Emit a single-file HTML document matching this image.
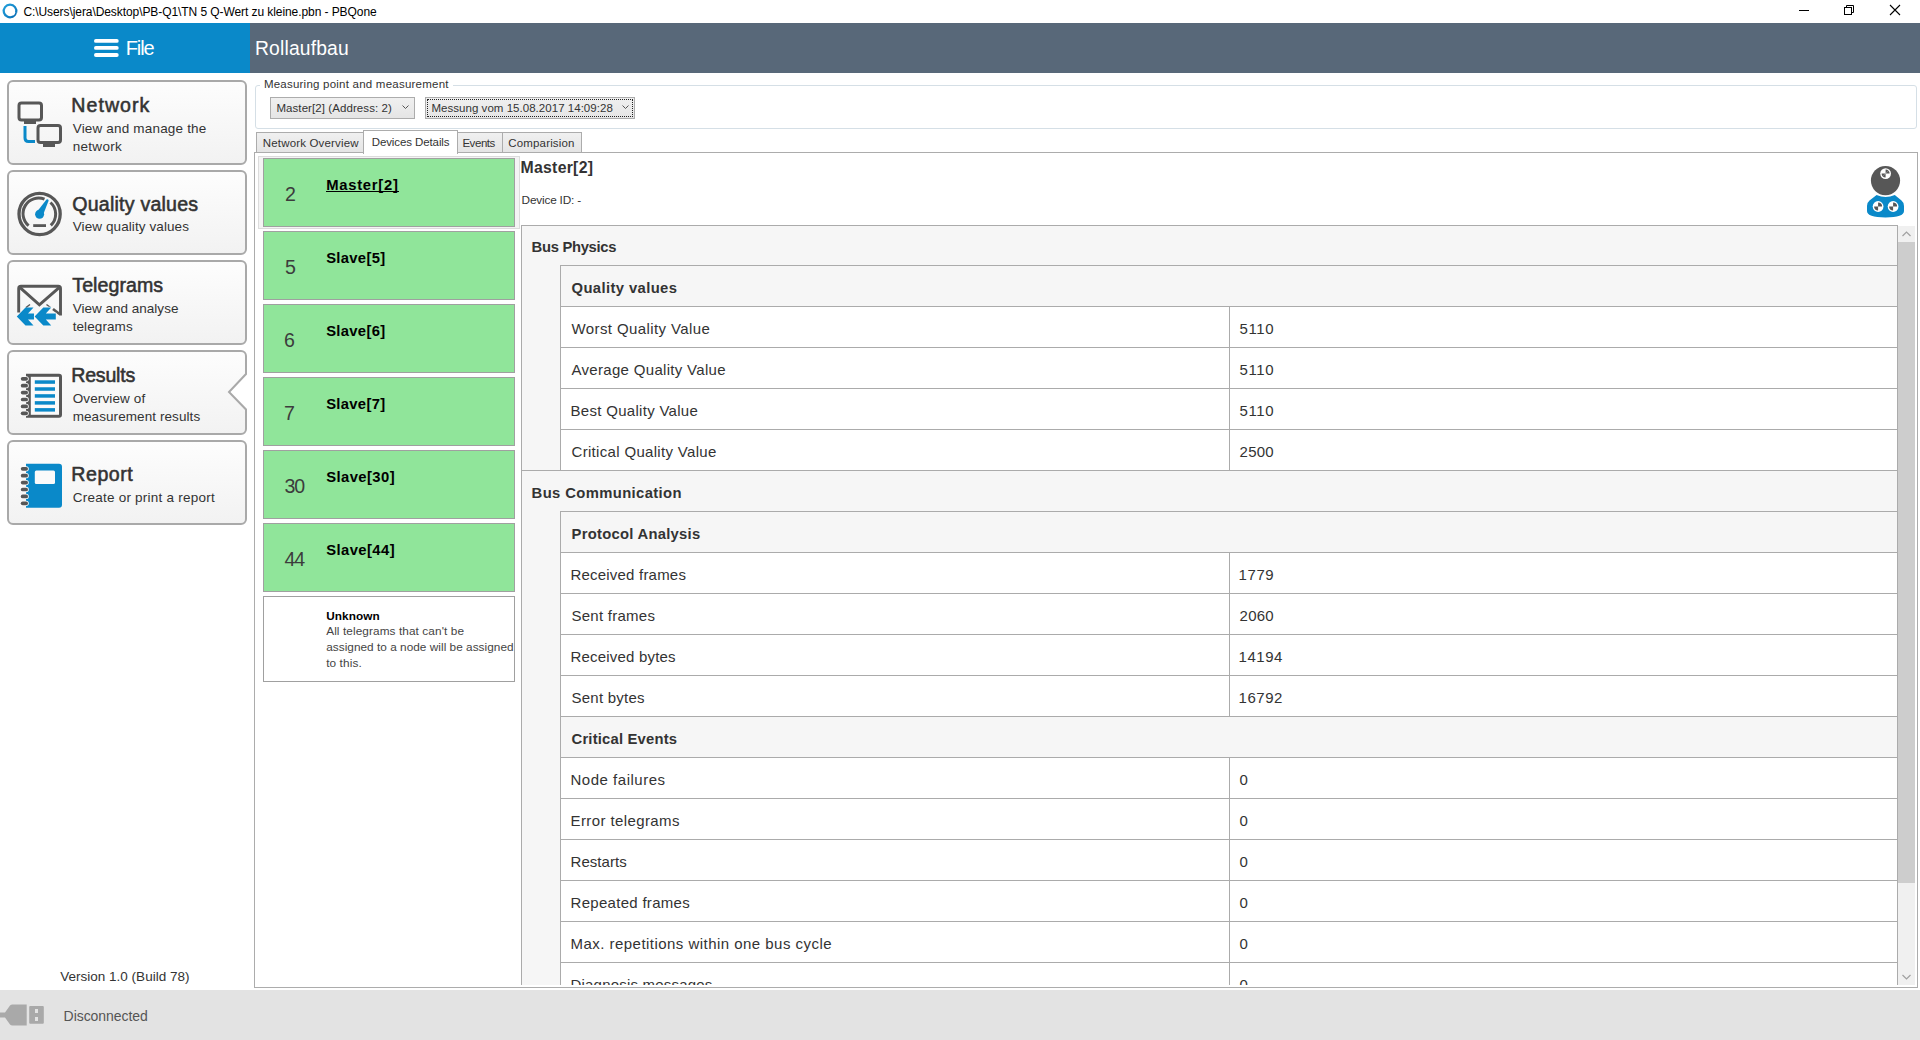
<!DOCTYPE html>
<html><head><meta charset="utf-8"><title>PBQone</title>
<style>
html,body{margin:0;padding:0;}
body{width:1920px;height:1040px;position:relative;overflow:hidden;background:#fff;font-family:"Liberation Sans",sans-serif;}
.t{position:absolute;white-space:pre;}
.b{position:absolute;}
</style></head><body>
<svg class="b" style="left:0;top:0" width="24" height="23"><defs><linearGradient id="ti" x1="0" y1="0" x2="1" y2="1"><stop offset="0" stop-color="#22a0dc"/><stop offset="1" stop-color="#0a72b8"/></linearGradient></defs><path d="M13.2 16.4A6.3 6.3 0 1 1 16.1 12.6" fill="none" stroke="url(#ti)" stroke-width="2.2"/><path d="M16.1 12.4Q15.8 15.8 12 17" fill="none" stroke="#0a72b8" stroke-width="1.6"/></svg>
<div class="t" style="left:23.40px;top:5.84px;font-size:12px;line-height:12px;letter-spacing:-0.076px;font-weight:400;color:#000;">C:\Users\jera\Desktop\PB-Q1\TN 5 Q-Wert zu kleine.pbn - PBQone</div>
<svg class="b" style="left:1790px;top:0" width="130" height="23"><line x1="9" y1="10.5" x2="19" y2="10.5" stroke="#000" stroke-width="1"/><rect x="54.5" y="7.5" width="7" height="7" fill="none" stroke="#000" stroke-width="1"/><path d="M56.5 7.5V5.5H63.5V12.5H61.5" fill="none" stroke="#000" stroke-width="1"/><path d="M100 5L110 15M110 5L100 15" stroke="#000" stroke-width="1.1"/></svg>
<div class="b" style="left:0px;top:23px;width:250px;height:50px;background:#0a89c9"></div>
<div class="b" style="left:250px;top:23px;width:1670px;height:50px;background:#586879"></div>
<svg class="b" style="left:94px;top:39px" width="25" height="19"><rect x="0" y="0" width="24.7" height="3.8" rx="1.9" fill="#fff"/><rect x="0" y="7" width="24.7" height="3.8" rx="1.9" fill="#fff"/><rect x="0" y="14.1" width="24.7" height="3.8" rx="1.9" fill="#fff"/></svg>
<div class="t" style="left:125.70px;top:38.07px;font-size:20px;line-height:20px;letter-spacing:-1.068px;font-weight:400;color:#fff;">File</div>
<div class="t" style="left:255.00px;top:39.46px;font-size:19.3px;line-height:19.3px;letter-spacing:0.171px;font-weight:400;color:#fff;">Rollaufbau</div>
<div class="b" style="left:7px;top:80px;width:240px;height:85px;box-sizing:border-box;border:2px solid #a9a9a9;border-radius:6px;background:linear-gradient(#fdfdfd,#f2f2f2)"></div>
<div class="t" style="left:71.30px;top:96.11px;font-size:19.6px;line-height:19.6px;letter-spacing:1.040px;font-weight:400;color:#333;-webkit-text-stroke:0.55px #333;">Network</div>
<div class="t" style="left:72.70px;top:122.07px;font-size:13.5px;line-height:13.5px;letter-spacing:0.181px;font-weight:400;color:#333;">View and manage the</div>
<div class="t" style="left:72.70px;top:139.97px;font-size:13.5px;line-height:13.5px;letter-spacing:0.297px;font-weight:400;color:#333;">network</div>
<div class="b" style="left:7px;top:170px;width:240px;height:85px;box-sizing:border-box;border:2px solid #a9a9a9;border-radius:6px;background:linear-gradient(#fdfdfd,#f2f2f2)"></div>
<div class="t" style="left:72.30px;top:194.91px;font-size:19.6px;line-height:19.6px;letter-spacing:0.214px;font-weight:400;color:#333;-webkit-text-stroke:0.55px #333;">Quality values</div>
<div class="t" style="left:72.70px;top:220.42px;font-size:13.5px;line-height:13.5px;letter-spacing:0.094px;font-weight:400;color:#333;">View quality values</div>
<div class="b" style="left:7px;top:260px;width:240px;height:85px;box-sizing:border-box;border:2px solid #a9a9a9;border-radius:6px;background:linear-gradient(#fdfdfd,#f2f2f2)"></div>
<div class="t" style="left:72.30px;top:276.11px;font-size:19.6px;line-height:19.6px;letter-spacing:0.058px;font-weight:400;color:#333;-webkit-text-stroke:0.55px #333;">Telegrams</div>
<div class="t" style="left:72.70px;top:302.07px;font-size:13.5px;line-height:13.5px;letter-spacing:0.009px;font-weight:400;color:#333;">View and analyse</div>
<div class="t" style="left:72.70px;top:319.57px;font-size:13.5px;line-height:13.5px;letter-spacing:0.085px;font-weight:400;color:#333;">telegrams</div>
<svg class="b" style="left:0;top:340px" width="260" height="105"><defs><linearGradient id="g" x1="0" y1="0" x2="0" y2="1"><stop offset="0" stop-color="#fdfdfd"/><stop offset="1" stop-color="#f2f2f2"/></linearGradient></defs><path d="M13 11H241A5 5 0 0 1 246 16V34L229 52L246 69.5V89A5 5 0 0 1 241 94H13A5 5 0 0 1 8 89V16A5 5 0 0 1 13 11Z" fill="url(#g)" stroke="#a9a9a9" stroke-width="2"/></svg>
<div class="t" style="left:71.30px;top:366.11px;font-size:19.6px;line-height:19.6px;letter-spacing:-0.240px;font-weight:400;color:#333;-webkit-text-stroke:0.55px #333;">Results</div>
<div class="t" style="left:72.70px;top:392.07px;font-size:13.5px;line-height:13.5px;letter-spacing:0.118px;font-weight:400;color:#333;">Overview of</div>
<div class="t" style="left:72.70px;top:409.97px;font-size:13.5px;line-height:13.5px;letter-spacing:0.078px;font-weight:400;color:#333;">measurement results</div>
<div class="b" style="left:7px;top:440px;width:240px;height:85px;box-sizing:border-box;border:2px solid #a9a9a9;border-radius:6px;background:linear-gradient(#fdfdfd,#f2f2f2)"></div>
<div class="t" style="left:71.30px;top:464.91px;font-size:19.6px;line-height:19.6px;letter-spacing:0.537px;font-weight:400;color:#333;-webkit-text-stroke:0.55px #333;">Report</div>
<div class="t" style="left:72.70px;top:490.87px;font-size:13.5px;line-height:13.5px;letter-spacing:0.239px;font-weight:400;color:#333;">Create or print a report</div>
<svg class="b" style="left:0;top:81px" width="70" height="83"><rect x="19" y="22" width="22.5" height="17" rx="2.5" fill="none" stroke="#575757" stroke-width="3"/><rect x="24" y="40" width="12" height="3" fill="#575757"/><path d="M25 45V57Q25 60.5 28.5 60.5H35" fill="none" stroke="#0a89c9" stroke-width="3"/><rect x="38" y="44.5" width="22.5" height="17" rx="2.5" fill="none" stroke="#575757" stroke-width="3"/><rect x="43" y="63" width="12" height="3" fill="#575757"/></svg>
<svg class="b" style="left:0;top:171px" width="70" height="83"><circle cx="39.6" cy="43" r="20.6" fill="none" stroke="#575757" stroke-width="3.3"/><path d="M28.6 54.6A15.6 15.6 0 0 1 44.5 28.2" fill="none" stroke="#575757" stroke-width="3"/><path d="M50.5 31.5A15.6 15.6 0 0 1 50.8 54.4" fill="none" stroke="#575757" stroke-width="3"/><rect x="33.2" y="53.2" width="12.8" height="2.8" fill="#575757"/><path d="M36 42L46.5 28.5Q48.5 27.5 48.6 29.8L43 44Z" fill="#0a89c9"/><circle cx="39.6" cy="43.3" r="4.5" fill="#0a89c9"/></svg>
<svg class="b" style="left:0;top:261px" width="70" height="83"><path d="M18.7 51.5V27.5Q18.7 25.2 21 25.2H58.2Q60.5 25.2 60.5 27.5V54.5" fill="none" stroke="#575757" stroke-width="2.9"/><path d="M19.8 26.3L39.4 43.8L59.4 26.3" fill="none" stroke="#575757" stroke-width="3"/><path d="M53 48L59.5 53" fill="none" stroke="#575757" stroke-width="2.6"/><path d="M26 46.5L30 43.5M46.5 43.5L50.5 46.5" fill="none" stroke="#575757" stroke-width="1.5"/><path d="M25.5 46.5H33.5L28 52.5H34V58.5H28L33.5 64.5H25.5L16.8 55.5Z" fill="#0a89c9"/><path d="M43.3 46.5H51.3L45.8 52.5H55.8V58.5H45.8L51.3 64.5H43.3L34.6 55.5Z" fill="#0a89c9" stroke="#f8f8f8" stroke-width="1.3" paint-order="stroke"/></svg>
<svg class="b" style="left:0;top:351px" width="70" height="83"><path d="M26 22.7H59Q62 22.7 62 25.7V63.8Q62 66.8 59 66.8H26Z" fill="#575757"/><rect x="30.8" y="25.8" width="28.2" height="38" fill="#fafafa"/><rect x="34.8" y="29.30" width="20.2" height="3.5" fill="#0a89c9"/><rect x="34.8" y="36.25" width="20.2" height="3.5" fill="#0a89c9"/><rect x="34.8" y="43.20" width="20.2" height="3.5" fill="#0a89c9"/><rect x="34.8" y="50.15" width="20.2" height="3.5" fill="#0a89c9"/><rect x="34.8" y="57.10" width="20.2" height="3.5" fill="#0a89c9"/><rect x="20.8" y="25.95" width="7.2" height="3.7" rx="1.85" fill="#575757" stroke="#fafafa" stroke-width="1.6" paint-order="stroke"/><rect x="20.8" y="32.85" width="7.2" height="3.7" rx="1.85" fill="#575757" stroke="#fafafa" stroke-width="1.6" paint-order="stroke"/><rect x="20.8" y="39.75" width="7.2" height="3.7" rx="1.85" fill="#575757" stroke="#fafafa" stroke-width="1.6" paint-order="stroke"/><rect x="20.8" y="46.65" width="7.2" height="3.7" rx="1.85" fill="#575757" stroke="#fafafa" stroke-width="1.6" paint-order="stroke"/><rect x="20.8" y="53.55" width="7.2" height="3.7" rx="1.85" fill="#575757" stroke="#fafafa" stroke-width="1.6" paint-order="stroke"/><rect x="20.8" y="60.45" width="7.2" height="3.7" rx="1.85" fill="#575757" stroke="#fafafa" stroke-width="1.6" paint-order="stroke"/></svg>
<svg class="b" style="left:0;top:441px" width="70" height="83"><path d="M26 22.7H59Q62 22.7 62 25.7V63.8Q62 66.8 59 66.8H26Z" fill="#0a89c9"/><rect x="34.8" y="29.6" width="20.2" height="13.3" rx="1.5" fill="#fafafa"/><rect x="20.8" y="25.95" width="7.2" height="3.7" rx="1.85" fill="#575757" stroke="#fafafa" stroke-width="1.6" paint-order="stroke"/><rect x="20.8" y="32.85" width="7.2" height="3.7" rx="1.85" fill="#575757" stroke="#fafafa" stroke-width="1.6" paint-order="stroke"/><rect x="20.8" y="39.75" width="7.2" height="3.7" rx="1.85" fill="#575757" stroke="#fafafa" stroke-width="1.6" paint-order="stroke"/><rect x="20.8" y="46.65" width="7.2" height="3.7" rx="1.85" fill="#575757" stroke="#fafafa" stroke-width="1.6" paint-order="stroke"/><rect x="20.8" y="53.55" width="7.2" height="3.7" rx="1.85" fill="#575757" stroke="#fafafa" stroke-width="1.6" paint-order="stroke"/><rect x="20.8" y="60.45" width="7.2" height="3.7" rx="1.85" fill="#575757" stroke="#fafafa" stroke-width="1.6" paint-order="stroke"/></svg>
<div class="t" style="left:60.20px;top:969.57px;font-size:13.5px;line-height:13.5px;letter-spacing:0.011px;font-weight:400;color:#333;">Version 1.0 (Build 78)</div>
<div class="b" style="left:0px;top:990px;width:1920px;height:50px;background:#e3e3e3"></div>
<svg class="b" style="left:0;top:990px" width="50" height="50"><path d="M0 22.5H5L10 15.5Q11 14.6 12.5 14.6H26.7V35.4H12.5Q11 35.4 10 34.5L5 27.5H0Z" fill="#a9a9a9"/><rect x="29.2" y="16" width="14.6" height="17.8" rx="1" fill="#a9a9a9"/><rect x="35" y="19" width="3" height="4" fill="#e3e3e3"/><rect x="35" y="27" width="3" height="4" fill="#e3e3e3"/></svg>
<div class="t" style="left:63.60px;top:1008.95px;font-size:14px;line-height:14px;letter-spacing:-0.058px;font-weight:400;color:#555;">Disconnected</div>
<div class="b" style="left:255px;top:85px;width:1662px;height:44px;box-sizing:border-box;border:1px solid #d5dfe6;border-radius:3px"></div>
<div class="b" style="left:260px;top:80px;width:193px;height:10px;background:#fff"></div>
<div class="t" style="left:263.90px;top:78.77px;font-size:11.5px;line-height:11.5px;letter-spacing:0.229px;font-weight:400;color:#333;">Measuring point and measurement</div>
<div class="b" style="left:270px;top:97px;width:145px;height:22px;box-sizing:border-box;border:1px solid #acacac;background:linear-gradient(#f0f0f0,#e5e5e5)"></div>
<div class="t" style="left:276.40px;top:102.77px;font-size:11.5px;line-height:11.5px;letter-spacing:0.080px;font-weight:400;color:#333;">Master[2] (Address: 2)</div>
<svg class="b" style="left:400px;top:102px" width="10" height="10"><path d="M2.5 3.5L5.5 6.5L8.5 3.5" fill="none" stroke="#555" stroke-width="1"/></svg>
<div class="b" style="left:425px;top:97px;width:210px;height:22px;box-sizing:border-box;border:1px solid #acacac;background:linear-gradient(#f0f0f0,#e5e5e5)"></div>
<div class="b" style="left:427px;top:99px;width:206px;height:18px;box-sizing:border-box;border:1px dotted #222"></div>
<div class="t" style="left:431.50px;top:102.77px;font-size:11.5px;line-height:11.5px;letter-spacing:0.033px;font-weight:400;color:#333;">Messung vom 15.08.2017 14:09:28</div>
<svg class="b" style="left:620px;top:102px" width="10" height="10"><path d="M2.5 3.5L5.5 6.5L8.5 3.5" fill="none" stroke="#555" stroke-width="1"/></svg>
<div class="b" style="left:254px;top:152px;width:1664px;height:836px;box-sizing:border-box;border:1px solid #acacac;background:#fff"></div>
<div class="b" style="left:256px;top:132px;width:109px;height:21px;box-sizing:border-box;border:1px solid #acacac;background:linear-gradient(#f0f0f0,#e5e5e5)"></div>
<div class="b" style="left:457px;top:132px;width:46px;height:21px;box-sizing:border-box;border:1px solid #acacac;background:linear-gradient(#f0f0f0,#e5e5e5)"></div>
<div class="b" style="left:502px;top:132px;width:80px;height:21px;box-sizing:border-box;border:1px solid #acacac;background:linear-gradient(#f0f0f0,#e5e5e5)"></div>
<div class="t" style="left:262.80px;top:137.87px;font-size:11.5px;line-height:11.5px;letter-spacing:0.161px;font-weight:400;color:#333;">Network Overview</div>
<div class="t" style="left:462.40px;top:137.87px;font-size:11.5px;line-height:11.5px;letter-spacing:-0.441px;font-weight:400;color:#333;">Events</div>
<div class="t" style="left:508.20px;top:137.87px;font-size:11.5px;line-height:11.5px;letter-spacing:0.174px;font-weight:400;color:#333;">Comparision</div>
<div class="b" style="left:363px;top:130px;width:95px;height:24px;box-sizing:border-box;border:1px solid #acacac;border-bottom:none;background:#fff"></div>
<div class="t" style="left:371.70px;top:136.87px;font-size:11.5px;line-height:11.5px;letter-spacing:-0.100px;font-weight:400;color:#333;">Devices Details</div>
<div class="b" style="left:258px;top:156px;width:262px;height:73px;box-sizing:border-box;border:1px solid #dcdcdc;background:#f4f4f4"></div>
<div class="b" style="left:263px;top:158px;width:252px;height:69px;box-sizing:border-box;border:1px solid #a0a0a0;background:#90e59a"></div>
<div class="t" style="left:285.10px;top:185.41px;font-size:19.6px;line-height:19.6px;letter-spacing:0.000px;font-weight:400;color:#3c3c3c;">2</div>
<div class="b" style="left:326px;top:191px;width:73px;height:1.2px;background:#000"></div>
<div class="t" style="left:326.20px;top:178.17px;font-size:14.8px;line-height:14.8px;letter-spacing:0.743px;font-weight:700;color:#000;">Master[2]</div>
<div class="b" style="left:263px;top:231px;width:252px;height:69px;box-sizing:border-box;border:1px solid #a0a0a0;background:#90e59a"></div>
<div class="t" style="left:285.10px;top:258.41px;font-size:19.6px;line-height:19.6px;letter-spacing:0.000px;font-weight:400;color:#3c3c3c;">5</div>
<div class="t" style="left:326.20px;top:251.17px;font-size:14.8px;line-height:14.8px;letter-spacing:0.311px;font-weight:700;color:#000;">Slave[5]</div>
<div class="b" style="left:263px;top:304px;width:252px;height:69px;box-sizing:border-box;border:1px solid #a0a0a0;background:#90e59a"></div>
<div class="t" style="left:284.10px;top:331.41px;font-size:19.6px;line-height:19.6px;letter-spacing:0.000px;font-weight:400;color:#3c3c3c;">6</div>
<div class="t" style="left:326.20px;top:324.17px;font-size:14.8px;line-height:14.8px;letter-spacing:0.311px;font-weight:700;color:#000;">Slave[6]</div>
<div class="b" style="left:263px;top:377px;width:252px;height:69px;box-sizing:border-box;border:1px solid #a0a0a0;background:#90e59a"></div>
<div class="t" style="left:284.10px;top:404.41px;font-size:19.6px;line-height:19.6px;letter-spacing:0.000px;font-weight:400;color:#3c3c3c;">7</div>
<div class="t" style="left:326.20px;top:397.17px;font-size:14.8px;line-height:14.8px;letter-spacing:0.311px;font-weight:700;color:#000;">Slave[7]</div>
<div class="b" style="left:263px;top:450px;width:252px;height:69px;box-sizing:border-box;border:1px solid #a0a0a0;background:#90e59a"></div>
<div class="t" style="left:284.50px;top:477.41px;font-size:19.6px;line-height:19.6px;letter-spacing:-1.097px;font-weight:400;color:#3c3c3c;">30</div>
<div class="t" style="left:326.20px;top:470.17px;font-size:14.8px;line-height:14.8px;letter-spacing:0.431px;font-weight:700;color:#000;">Slave[30]</div>
<div class="b" style="left:263px;top:523px;width:252px;height:69px;box-sizing:border-box;border:1px solid #a0a0a0;background:#90e59a"></div>
<div class="t" style="left:284.50px;top:550.41px;font-size:19.6px;line-height:19.6px;letter-spacing:-1.097px;font-weight:400;color:#3c3c3c;">44</div>
<div class="t" style="left:326.20px;top:543.17px;font-size:14.8px;line-height:14.8px;letter-spacing:0.431px;font-weight:700;color:#000;">Slave[44]</div>
<div class="b" style="left:263px;top:596px;width:252px;height:86px;box-sizing:border-box;border:1px solid #a0a0a0;background:#fff"></div>
<div class="t" style="left:326.20px;top:610.81px;font-size:11.8px;line-height:11.8px;letter-spacing:0.088px;font-weight:700;color:#000;">Unknown</div>
<div class="t" style="left:326.20px;top:626.01px;font-size:11.8px;line-height:11.8px;letter-spacing:0.092px;font-weight:400;color:#444;">All telegrams that can&#x27;t be</div>
<div class="t" style="left:326.20px;top:642.41px;font-size:11.8px;line-height:11.8px;letter-spacing:0.032px;font-weight:400;color:#444;">assigned to a node will be assigned</div>
<div class="t" style="left:326.20px;top:658.01px;font-size:11.8px;line-height:11.8px;letter-spacing:0.104px;font-weight:400;color:#444;">to this.</div>
<div class="t" style="left:520.60px;top:159.63px;font-size:15.8px;line-height:15.8px;letter-spacing:0.266px;font-weight:700;color:#333;">Master[2]</div>
<div class="t" style="left:521.60px;top:194.61px;font-size:11.8px;line-height:11.8px;letter-spacing:-0.190px;font-weight:400;color:#333;">Device ID: -</div>
<svg class="b" style="left:1860px;top:160px" width="50" height="60"><path d="M16.6 35Q25.5 38.8 34.8 35L41.5 40.5Q44 42.5 44 46V51Q44 57.4 25.5 57.4Q7 57.4 7 51V46Q7 42.5 9.5 40.5Z" fill="#0a89c9"/><circle cx="25.5" cy="20.6" r="14.6" fill="#575757"/><g><circle cx="25.6" cy="13.6" r="5.4" fill="#fff"/><circle cx="18.1" cy="46.5" r="5.4" fill="#fff"/><circle cx="33.1" cy="46.5" r="5.4" fill="#fff"/><path d="M25.6 13.6L28.5 10.7A4 4 0 0 1 29.6 13.6Z M25.6 13.6L22.7 16.5A4 4 0 0 1 21.6 13.6Z" fill="#575757"/><path d="M25.6 13.6V9.6A4 4 0 0 1 28.5 10.7Z M25.6 13.6V17.6A4 4 0 0 1 22.7 16.5Z" fill="#575757"/><path d="M18.1 46.5L21 43.6A4 4 0 0 1 22.1 46.5Z M18.1 46.5L15.2 49.4A4 4 0 0 1 14.1 46.5Z M18.1 46.5V42.5A4 4 0 0 1 21 43.6Z M18.1 46.5V50.5A4 4 0 0 1 15.2 49.4Z" fill="#575757"/><path d="M33.1 46.5L36 43.6A4 4 0 0 1 37.1 46.5Z M33.1 46.5L30.2 49.4A4 4 0 0 1 29.1 46.5Z M33.1 46.5V42.5A4 4 0 0 1 36 43.6Z M33.1 46.5V50.5A4 4 0 0 1 30.2 49.4Z" fill="#575757"/></g></svg>
<div class="b" style="left:521px;top:225px;width:1377px;height:760px;overflow:hidden">
<div class="b" style="left:0px;top:0px;width:1377px;height:800px;background:#f6f6f6"></div>
<div class="b" style="left:0px;top:0px;width:1377px;height:1px;background:#ababab"></div>
<div class="b" style="left:0px;top:0px;width:1px;height:800px;background:#ababab"></div>
<div class="b" style="left:1376px;top:0px;width:1px;height:800px;background:#ababab"></div>
<div class="t" style="left:10.60px;top:14.67px;font-size:14.8px;line-height:14.8px;letter-spacing:-0.317px;font-weight:700;color:#333;">Bus Physics</div>
<div class="b" style="left:39px;top:40px;width:1337px;height:1px;background:#ababab"></div>
<div class="t" style="left:50.50px;top:56.07px;font-size:14.8px;line-height:14.8px;letter-spacing:0.392px;font-weight:700;color:#333;">Quality values</div>
<div class="b" style="left:39px;top:81px;width:1337px;height:1px;background:#ababab"></div>
<div class="b" style="left:40px;top:82px;width:1336px;height:40px;background:#fff"></div>
<div class="b" style="left:708px;top:82px;width:1px;height:40px;background:#ababab"></div>
<div class="t" style="left:50.50px;top:96.10px;font-size:15px;line-height:15px;letter-spacing:0.404px;font-weight:400;color:#333;">Worst Quality Value</div>
<div class="t" style="left:718.60px;top:96.10px;font-size:15px;line-height:15px;letter-spacing:0.595px;font-weight:400;color:#333;">5110</div>
<div class="b" style="left:39px;top:122px;width:1337px;height:1px;background:#ababab"></div>
<div class="b" style="left:40px;top:123px;width:1336px;height:40px;background:#fff"></div>
<div class="b" style="left:708px;top:123px;width:1px;height:40px;background:#ababab"></div>
<div class="t" style="left:50.50px;top:137.10px;font-size:15px;line-height:15px;letter-spacing:0.311px;font-weight:400;color:#333;">Average Quality Value</div>
<div class="t" style="left:718.60px;top:137.10px;font-size:15px;line-height:15px;letter-spacing:0.595px;font-weight:400;color:#333;">5110</div>
<div class="b" style="left:39px;top:163px;width:1337px;height:1px;background:#ababab"></div>
<div class="b" style="left:40px;top:164px;width:1336px;height:40px;background:#fff"></div>
<div class="b" style="left:708px;top:164px;width:1px;height:40px;background:#ababab"></div>
<div class="t" style="left:49.50px;top:178.10px;font-size:15px;line-height:15px;letter-spacing:0.297px;font-weight:400;color:#333;">Best Quality Value</div>
<div class="t" style="left:718.60px;top:178.10px;font-size:15px;line-height:15px;letter-spacing:0.595px;font-weight:400;color:#333;">5110</div>
<div class="b" style="left:39px;top:204px;width:1337px;height:1px;background:#ababab"></div>
<div class="b" style="left:40px;top:205px;width:1336px;height:40px;background:#fff"></div>
<div class="b" style="left:708px;top:205px;width:1px;height:40px;background:#ababab"></div>
<div class="t" style="left:50.50px;top:219.10px;font-size:15px;line-height:15px;letter-spacing:0.321px;font-weight:400;color:#333;">Critical Quality Value</div>
<div class="t" style="left:718.60px;top:219.10px;font-size:15px;line-height:15px;letter-spacing:0.224px;font-weight:400;color:#333;">2500</div>
<div class="b" style="left:39px;top:40px;width:1px;height:205px;background:#ababab"></div>
<div class="b" style="left:0px;top:245px;width:1377px;height:1px;background:#ababab"></div>
<div class="t" style="left:10.60px;top:260.77px;font-size:14.8px;line-height:14.8px;letter-spacing:0.380px;font-weight:700;color:#333;">Bus Communication</div>
<div class="b" style="left:39px;top:286px;width:1337px;height:1px;background:#ababab"></div>
<div class="t" style="left:50.50px;top:302.07px;font-size:14.8px;line-height:14.8px;letter-spacing:0.265px;font-weight:700;color:#333;">Protocol Analysis</div>
<div class="b" style="left:39px;top:327px;width:1337px;height:1px;background:#ababab"></div>
<div class="b" style="left:40px;top:328px;width:1336px;height:40px;background:#fff"></div>
<div class="b" style="left:708px;top:328px;width:1px;height:40px;background:#ababab"></div>
<div class="t" style="left:49.50px;top:342.10px;font-size:15px;line-height:15px;letter-spacing:0.204px;font-weight:400;color:#333;">Received frames</div>
<div class="t" style="left:717.60px;top:342.10px;font-size:15px;line-height:15px;letter-spacing:0.558px;font-weight:400;color:#333;">1779</div>
<div class="b" style="left:39px;top:368px;width:1337px;height:1px;background:#ababab"></div>
<div class="b" style="left:40px;top:369px;width:1336px;height:40px;background:#fff"></div>
<div class="b" style="left:708px;top:369px;width:1px;height:40px;background:#ababab"></div>
<div class="t" style="left:50.50px;top:383.10px;font-size:15px;line-height:15px;letter-spacing:0.253px;font-weight:400;color:#333;">Sent frames</div>
<div class="t" style="left:718.60px;top:383.10px;font-size:15px;line-height:15px;letter-spacing:0.224px;font-weight:400;color:#333;">2060</div>
<div class="b" style="left:39px;top:409px;width:1337px;height:1px;background:#ababab"></div>
<div class="b" style="left:40px;top:410px;width:1336px;height:40px;background:#fff"></div>
<div class="b" style="left:708px;top:410px;width:1px;height:40px;background:#ababab"></div>
<div class="t" style="left:49.50px;top:424.10px;font-size:15px;line-height:15px;letter-spacing:0.196px;font-weight:400;color:#333;">Received bytes</div>
<div class="t" style="left:717.60px;top:424.10px;font-size:15px;line-height:15px;letter-spacing:0.508px;font-weight:400;color:#333;">14194</div>
<div class="b" style="left:39px;top:450px;width:1337px;height:1px;background:#ababab"></div>
<div class="b" style="left:40px;top:451px;width:1336px;height:40px;background:#fff"></div>
<div class="b" style="left:708px;top:451px;width:1px;height:40px;background:#ababab"></div>
<div class="t" style="left:50.50px;top:465.10px;font-size:15px;line-height:15px;letter-spacing:0.247px;font-weight:400;color:#333;">Sent bytes</div>
<div class="t" style="left:717.60px;top:465.10px;font-size:15px;line-height:15px;letter-spacing:0.508px;font-weight:400;color:#333;">16792</div>
<div class="b" style="left:39px;top:491px;width:1337px;height:1px;background:#ababab"></div>
<div class="t" style="left:50.50px;top:507.07px;font-size:14.8px;line-height:14.8px;letter-spacing:0.195px;font-weight:700;color:#333;">Critical Events</div>
<div class="b" style="left:39px;top:532px;width:1337px;height:1px;background:#ababab"></div>
<div class="b" style="left:40px;top:533px;width:1336px;height:40px;background:#fff"></div>
<div class="b" style="left:708px;top:533px;width:1px;height:40px;background:#ababab"></div>
<div class="t" style="left:49.50px;top:547.10px;font-size:15px;line-height:15px;letter-spacing:0.518px;font-weight:400;color:#333;">Node failures</div>
<div class="t" style="left:718.60px;top:547.10px;font-size:15px;line-height:15px;letter-spacing:0.000px;font-weight:400;color:#333;">0</div>
<div class="b" style="left:39px;top:573px;width:1337px;height:1px;background:#ababab"></div>
<div class="b" style="left:40px;top:574px;width:1336px;height:40px;background:#fff"></div>
<div class="b" style="left:708px;top:574px;width:1px;height:40px;background:#ababab"></div>
<div class="t" style="left:49.50px;top:588.10px;font-size:15px;line-height:15px;letter-spacing:0.396px;font-weight:400;color:#333;">Error telegrams</div>
<div class="t" style="left:718.60px;top:588.10px;font-size:15px;line-height:15px;letter-spacing:0.000px;font-weight:400;color:#333;">0</div>
<div class="b" style="left:39px;top:614px;width:1337px;height:1px;background:#ababab"></div>
<div class="b" style="left:40px;top:615px;width:1336px;height:40px;background:#fff"></div>
<div class="b" style="left:708px;top:615px;width:1px;height:40px;background:#ababab"></div>
<div class="t" style="left:49.50px;top:629.10px;font-size:15px;line-height:15px;letter-spacing:0.050px;font-weight:400;color:#333;">Restarts</div>
<div class="t" style="left:718.60px;top:629.10px;font-size:15px;line-height:15px;letter-spacing:0.000px;font-weight:400;color:#333;">0</div>
<div class="b" style="left:39px;top:655px;width:1337px;height:1px;background:#ababab"></div>
<div class="b" style="left:40px;top:656px;width:1336px;height:40px;background:#fff"></div>
<div class="b" style="left:708px;top:656px;width:1px;height:40px;background:#ababab"></div>
<div class="t" style="left:49.50px;top:670.10px;font-size:15px;line-height:15px;letter-spacing:0.295px;font-weight:400;color:#333;">Repeated frames</div>
<div class="t" style="left:718.60px;top:670.10px;font-size:15px;line-height:15px;letter-spacing:0.000px;font-weight:400;color:#333;">0</div>
<div class="b" style="left:39px;top:696px;width:1337px;height:1px;background:#ababab"></div>
<div class="b" style="left:40px;top:697px;width:1336px;height:40px;background:#fff"></div>
<div class="b" style="left:708px;top:697px;width:1px;height:40px;background:#ababab"></div>
<div class="t" style="left:49.50px;top:711.10px;font-size:15px;line-height:15px;letter-spacing:0.465px;font-weight:400;color:#333;">Max. repetitions within one bus cycle</div>
<div class="t" style="left:718.60px;top:711.10px;font-size:15px;line-height:15px;letter-spacing:0.000px;font-weight:400;color:#333;">0</div>
<div class="b" style="left:39px;top:737px;width:1337px;height:1px;background:#ababab"></div>
<div class="b" style="left:40px;top:738px;width:1336px;height:40px;background:#fff"></div>
<div class="b" style="left:708px;top:738px;width:1px;height:40px;background:#ababab"></div>
<div class="t" style="left:49.50px;top:752.10px;font-size:15px;line-height:15px;letter-spacing:0.200px;font-weight:400;color:#333;">Diagnosis messages</div>
<div class="t" style="left:718.60px;top:752.10px;font-size:15px;line-height:15px;letter-spacing:0.000px;font-weight:400;color:#333;">0</div>
<div class="b" style="left:39px;top:286px;width:1px;height:600px;background:#ababab"></div>
</div>
<div class="b" style="left:1898px;top:226px;width:17px;height:759px;background:#f0f0f0"></div>
<div class="b" style="left:1898px;top:242px;width:17px;height:641px;background:#cdcdcd"></div>
<svg class="b" style="left:1898px;top:226px" width="17" height="16"><path d="M4.5 10L8.5 6L12.5 10" fill="none" stroke="#a0a0a0" stroke-width="1.2"/></svg>
<svg class="b" style="left:1898px;top:969px" width="17" height="16"><path d="M4.5 6L8.5 10L12.5 6" fill="none" stroke="#a0a0a0" stroke-width="1.2"/></svg>

</body></html>
